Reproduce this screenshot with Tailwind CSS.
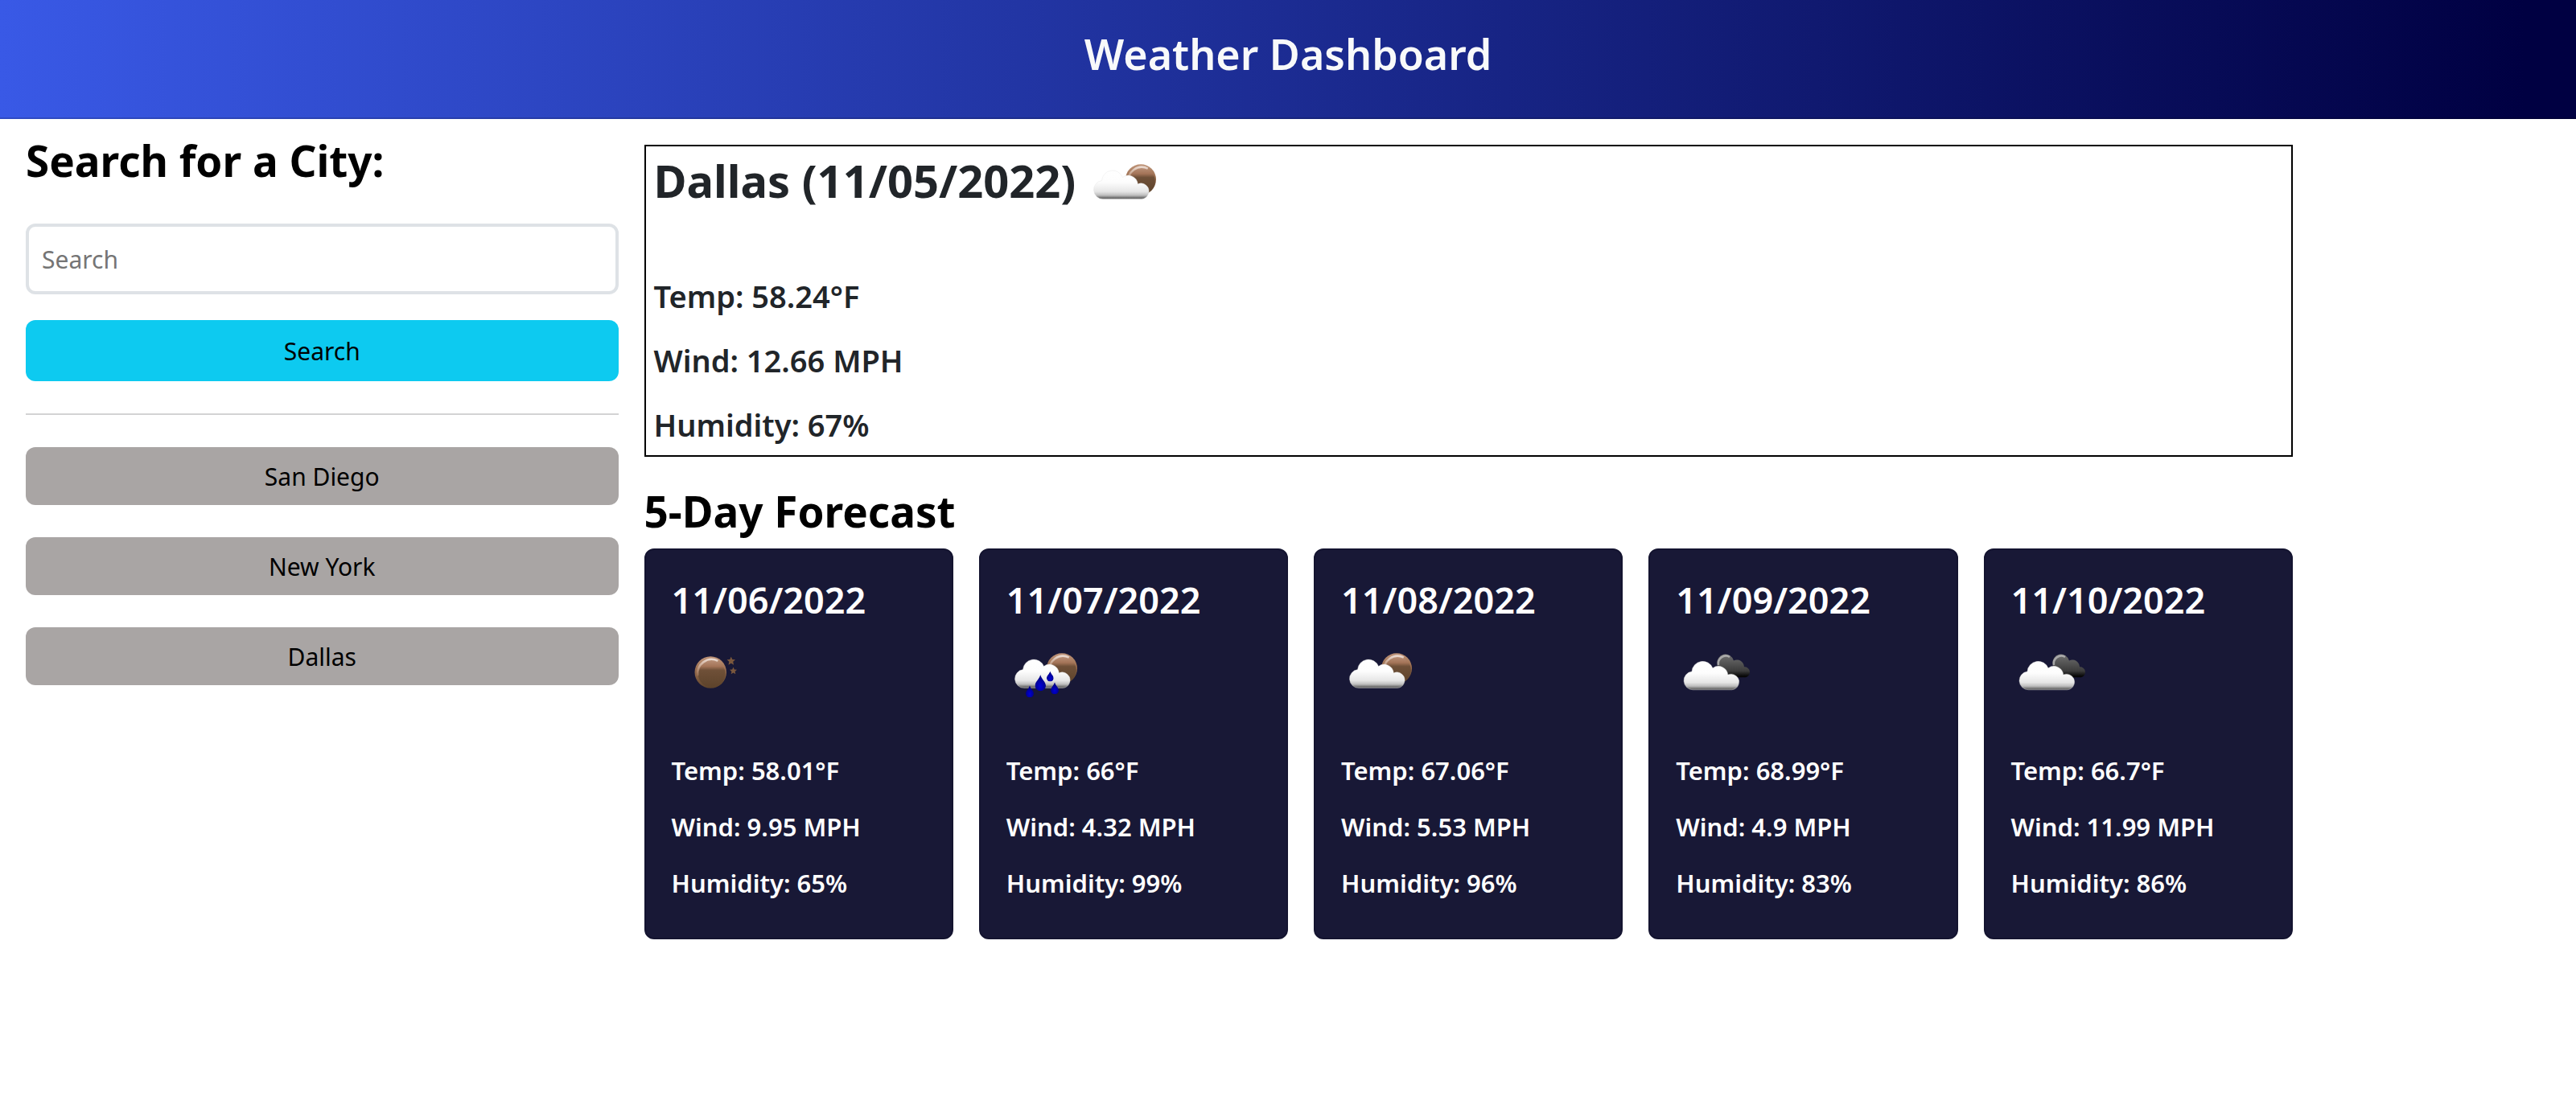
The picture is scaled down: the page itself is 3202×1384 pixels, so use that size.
<!DOCTYPE html>
<html lang="en">
<head>
<meta charset="utf-8">
<meta name="viewport" content="width=device-width, initial-scale=1">
<title>Weather Dashboard</title>
<script src="https://cdn.jsdelivr.net/npm/@tailwindcss/browser@4"></script>
</head>
<body class="min-h-screen bg-white font-['Noto_Sans','Open_Sans',sans-serif] text-[#212529]">

<!-- Shared weather icon shapes -->
<svg class="absolute size-0" aria-hidden="true">
  <defs>
    <linearGradient id="cloudFill" x1="0" y1="27" x2="0" y2="66" gradientUnits="userSpaceOnUse">
      <stop offset="0" stop-color="#fff"/><stop offset=".45" stop-color="#fdfdfd"/><stop offset=".75" stop-color="#e6e6e6"/><stop offset=".87" stop-color="#bdbdbd"/><stop offset=".94" stop-color="#777"/><stop offset="1" stop-color="#606060"/>
    </linearGradient>
    <linearGradient id="darkFill" x1="0" y1="24" x2="0" y2="53" gradientUnits="userSpaceOnUse">
      <stop offset="0" stop-color="#707070"/><stop offset=".3" stop-color="#595959"/><stop offset=".7" stop-color="#3c3c3c"/><stop offset=".9" stop-color="#0c0c0c"/><stop offset="1" stop-color="#000"/>
    </linearGradient>
    <linearGradient id="moonRim" x1="0" y1="0" x2="0" y2="1">
      <stop offset="0" stop-color="#c0957a"/><stop offset=".4" stop-color="#9c6f50"/><stop offset="1" stop-color="#5d432b"/>
    </linearGradient>
    <linearGradient id="moonFace" x1="0" y1="0" x2="0" y2="1">
      <stop offset="0" stop-color="#b98f76"/><stop offset=".22" stop-color="#a47458"/><stop offset=".36" stop-color="#6f5038"/><stop offset="1" stop-color="#5d432b"/>
    </linearGradient>
    <linearGradient id="moonShine" x1="0" y1="0" x2="0" y2="1">
      <stop offset="0" stop-color="#ead9cf"/><stop offset="1" stop-color="#b98c70" stop-opacity=".3"/>
    </linearGradient>
    <radialGradient id="dropFill" cx=".5" cy=".7" r=".5">
      <stop offset="0" stop-color="#0000d8"/><stop offset="1" stop-color="#00008a"/>
    </radialGradient>
    <symbol id="cloud" viewBox="0 0 100 100">
      <path fill="url(#cloudFill)" stroke="#e2e2e2" stroke-opacity=".55" stroke-width=".7" d="M22 65.5A11.5 11.5 0 0 1 20.5 42.6A13.5 13.5 0 0 1 46.5 38.5A11.8 11.8 0 0 1 65.3 46.8A9.8 9.8 0 0 1 78.5 59A10 10 0 0 1 70 65.5Z"/>
    </symbol>
    <symbol id="moon" viewBox="0 0 40 40">
      <circle cx="20" cy="20" r="19.5" fill="url(#moonRim)"/>
      <circle cx="21.5" cy="22" r="16.8" fill="url(#moonFace)"/>
      <path fill="none" stroke="url(#moonShine)" stroke-width="2.6" d="M4.5 24A17 17 0 0 1 29 6"/>
    </symbol>
    <symbol id="drop" viewBox="0 0 12 18">
      <path fill="url(#dropFill)" d="M6 0C6.8 4.5 12 8 12 12.2A6 5.8 0 0 1 0 12.2C0 8 5.2 4.5 6 0Z"/>
    </symbol>
    <symbol id="star" viewBox="0 0 20 20">
      <path fill="#7a573d" d="M10 0l2.9 6.600 7.100.700-5.300 4.800L16.200 19.500 10 15.600 3.800 19.500l1.500-7.400L0 7.300l7.100-.700z"/>
    </symbol>
    <symbol id="partly-cloudy-night" viewBox="0 0 100 100">
      <use href="#moon" x="49.500" y="21.800" width="39" height="39"/>
      <use href="#cloud" width="100" height="100"/>
    </symbol>
    <symbol id="clear-night" viewBox="0 0 100 100">
      <use href="#moon" x="28" y="25.800" width="40.500" height="40.500"/>
      <use href="#star" x="68.500" y="26.500" width="10.500" height="10.500"/>
      <use href="#star" x="72" y="39.500" width="9" height="9"/>
    </symbol>
    <symbol id="rain-night" viewBox="0 0 100 100">
      <use href="#partly-cloudy-night" width="100" height="100"/>
      <use href="#drop" x="35.500" y="49" width="13.500" height="20.200"/>
      <use href="#drop" x="50" y="44.500" width="8.700" height="13"/>
      <use href="#drop" x="24" y="62.300" width="10" height="15"/>
      <use href="#drop" x="55" y="58.300" width="10" height="15"/>
    </symbol>
    <symbol id="overcast-night" viewBox="0 0 100 100">
      <path fill="url(#darkFill)" d="M54 52.300H87A6.600 6.600 0 0 0 85 39.300A9 9 0 0 0 72 31.500A10.500 10.500 0 0 0 51.500 36Z"/>
      <path fill="none" stroke="#b5b5b5" stroke-width="2.600" stroke-opacity=".85" d="M53 37A9.500 9.500 0 0 1 67 26.800"/>
      <use href="#cloud" x="-.5" y="2.300" width="100" height="100"/>
    </symbol>
  </defs>
</svg>

<header class="border-b-2 border-black/15 bg-[linear-gradient(90deg,#3959e6_0%,#000042_98%)] bg-origin-border pt-8 pb-11 text-center">
  <h1 class="text-[52px] leading-[70px] font-semibold text-[#f8f9fa]">Weather Dashboard</h1>
</header>

<main class="flex items-start">
  <aside class="w-1/4 px-8 pt-4">
    <form onsubmit="return false">
      <h2 class="text-[53px] leading-[72px] font-bold text-black"><label for="city">Search for a City:</label></h2>
      <input id="city" type="text" placeholder="Search" class="mt-[42px] block h-[88px] w-full rounded-xl border-4 border-[#dee2e6] px-4 text-[30px] text-black placeholder:text-[#757575]">
      <button type="submit" class="mt-8 block h-[76px] w-full rounded-xl bg-[#0dcaf0] text-[30px] text-black">Search</button>
    </form>
    <hr class="my-10 border-t-2 border-[#d3d3d4]">
    <div class="flex flex-col gap-10">
      <button type="button" class="h-[72px] rounded-xl bg-[#a9a5a4] text-[30px] text-black">San Diego</button>
      <button type="button" class="h-[72px] rounded-xl bg-[#a9a5a4] text-[30px] text-black">New York</button>
      <button type="button" class="h-[72px] rounded-xl bg-[#a9a5a4] text-[30px] text-black">Dallas</button>
    </div>
  </aside>

  <div class="w-[64%] pt-8">
    <section class="border-2 border-black px-[10px] pb-[14px]">
      <div class="mb-[62px] flex items-start gap-3">
        <h2 class="text-[56px] leading-[84px] font-bold">Dallas (11/05/2022)</h2>
        <svg class="size-[100px] shrink-0" role="img" aria-label="Broken clouds"><use href="#partly-cloudy-night"/></svg>
      </div>
      <div class="flex flex-col gap-8 text-[38px] leading-[48px] font-semibold">
        <p>Temp: 58.24°F</p>
        <p>Wind: 12.66 MPH</p>
        <p>Humidity: 67%</p>
      </div>
    </section>

    <section class="mt-8">
      <h2 class="mb-[10px] text-[53px] leading-[72px] font-bold text-black">5-Day Forecast</h2>
      <div class="grid grid-cols-5 gap-8 text-white">
        <article class="rounded-xl border-2 border-[#141430] bg-[#181836] px-8 pt-8 pb-[49px]">
          <h3 class="text-[45px] leading-[60px] font-semibold">11/06/2022</h3>
          <svg class="mt-[14px] mb-[49px] size-[100px]" role="img" aria-label="Clear sky"><use href="#clear-night"/></svg>
          <div class="flex flex-col gap-8 text-[31px] leading-[38px] font-semibold">
            <p>Temp: 58.01°F</p>
            <p>Wind: 9.95 MPH</p>
            <p>Humidity: 65%</p>
          </div>
        </article>
        <article class="rounded-xl border-2 border-[#141430] bg-[#181836] px-8 pt-8 pb-[49px]">
          <h3 class="text-[45px] leading-[60px] font-semibold">11/07/2022</h3>
          <svg class="mt-[14px] mb-[49px] size-[100px]" role="img" aria-label="Rain"><use href="#rain-night"/></svg>
          <div class="flex flex-col gap-8 text-[31px] leading-[38px] font-semibold">
            <p>Temp: 66°F</p>
            <p>Wind: 4.32 MPH</p>
            <p>Humidity: 99%</p>
          </div>
        </article>
        <article class="rounded-xl border-2 border-[#141430] bg-[#181836] px-8 pt-8 pb-[49px]">
          <h3 class="text-[45px] leading-[60px] font-semibold">11/08/2022</h3>
          <svg class="mt-[14px] mb-[49px] size-[100px]" role="img" aria-label="Few clouds"><use href="#partly-cloudy-night"/></svg>
          <div class="flex flex-col gap-8 text-[31px] leading-[38px] font-semibold">
            <p>Temp: 67.06°F</p>
            <p>Wind: 5.53 MPH</p>
            <p>Humidity: 96%</p>
          </div>
        </article>
        <article class="rounded-xl border-2 border-[#141430] bg-[#181836] px-8 pt-8 pb-[49px]">
          <h3 class="text-[45px] leading-[60px] font-semibold">11/09/2022</h3>
          <svg class="mt-[14px] mb-[49px] size-[100px]" role="img" aria-label="Overcast clouds"><use href="#overcast-night"/></svg>
          <div class="flex flex-col gap-8 text-[31px] leading-[38px] font-semibold">
            <p>Temp: 68.99°F</p>
            <p>Wind: 4.9 MPH</p>
            <p>Humidity: 83%</p>
          </div>
        </article>
        <article class="rounded-xl border-2 border-[#141430] bg-[#181836] px-8 pt-8 pb-[49px]">
          <h3 class="text-[45px] leading-[60px] font-semibold">11/10/2022</h3>
          <svg class="mt-[14px] mb-[49px] size-[100px]" role="img" aria-label="Overcast clouds"><use href="#overcast-night"/></svg>
          <div class="flex flex-col gap-8 text-[31px] leading-[38px] font-semibold">
            <p>Temp: 66.7°F</p>
            <p>Wind: 11.99 MPH</p>
            <p>Humidity: 86%</p>
          </div>
        </article>
      </div>
    </section>
  </div>
</main>
</body>
</html>
